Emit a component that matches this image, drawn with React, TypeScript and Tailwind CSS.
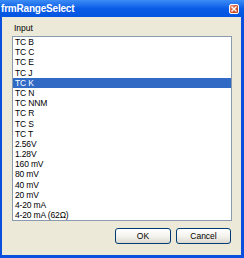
const items = [
  "TC B",
  "TC C",
  "TC E",
  "TC J",
  "TC K",
  "TC N",
  "TC NNM",
  "TC R",
  "TC S",
  "TC T",
  "2.56V",
  "1.28V",
  "160 mV",
  "80 mV",
  "40 mV",
  "20 mV",
  "4-20 mA",
  "4-20 mA (62Ω)",
];

function CloseButton() {
  return (
    <div className="w-[10px] h-[10px] rounded-[2px] border border-white bg-gradient-to-br from-[#e8907a] via-[#d9582f] to-[#c2401c] flex items-center justify-center">
      <svg width="6" height="6" viewBox="0 0 6 6">
        <path d="M0.5 0.5 L5.5 5.5 M5.5 0.5 L0.5 5.5" stroke="white" strokeWidth="1.4" />
      </svg>
    </div>
  );
}

function XpButton({ label, width }: { label: string; width: string }) {
  return (
    <button
      className={`${width} h-[16px] rounded-[3px] border border-[#003c74] bg-gradient-to-b from-white via-[#f4f3ee] to-[#dcdad0] text-[8.5px] leading-none text-black flex items-center justify-center`}
    >
      {label}
    </button>
  );
}

export default function App() {
  const selected = 4;

  return (
    <div
      className="w-[244px] h-[258px] bg-[#0a4fdd] flex flex-col overflow-hidden"
      style={{ fontFamily: '"Liberation Sans", Arial, sans-serif' }}
    >
      <div className="h-[17px] shrink-0 bg-gradient-to-b from-[#3b8cf5] via-[#0a5ce6] to-[#0255e0] flex items-center justify-between pl-[1px] pr-[5px]">
        <span className="text-white font-bold text-[10px] leading-none tracking-[-0.2px]">frmRangeSelect</span>
        <CloseButton />
      </div>

      <div className="flex-1 ml-[2px] mr-[3px] mb-[3px] bg-[#ece9d8] flex flex-col pl-[10px] pt-[5px]">
        <div className="h-[12px] leading-[12px] text-[8.5px] text-black pl-[2px]">Input</div>

        <div className="mt-[2px] w-[220px] border border-[#8a9bb0] bg-white">
          {items.map((item, i) => (
            <div
              key={item}
              className={`h-[10.2px] leading-[10.2px] text-[8.5px] tracking-[-0.15px] pl-[2px] whitespace-nowrap ${
                i === selected ? "bg-[#316ac5] text-white" : "text-black"
              }`}
            >
              {item}
            </div>
          ))}
        </div>

        <div className="mt-[7px] w-[220px] flex justify-end gap-[5px] pr-[1px]">
          <XpButton label="OK" width="w-[56px]" />
          <XpButton label="Cancel" width="w-[55px]" />
        </div>
      </div>
    </div>
  );
}
